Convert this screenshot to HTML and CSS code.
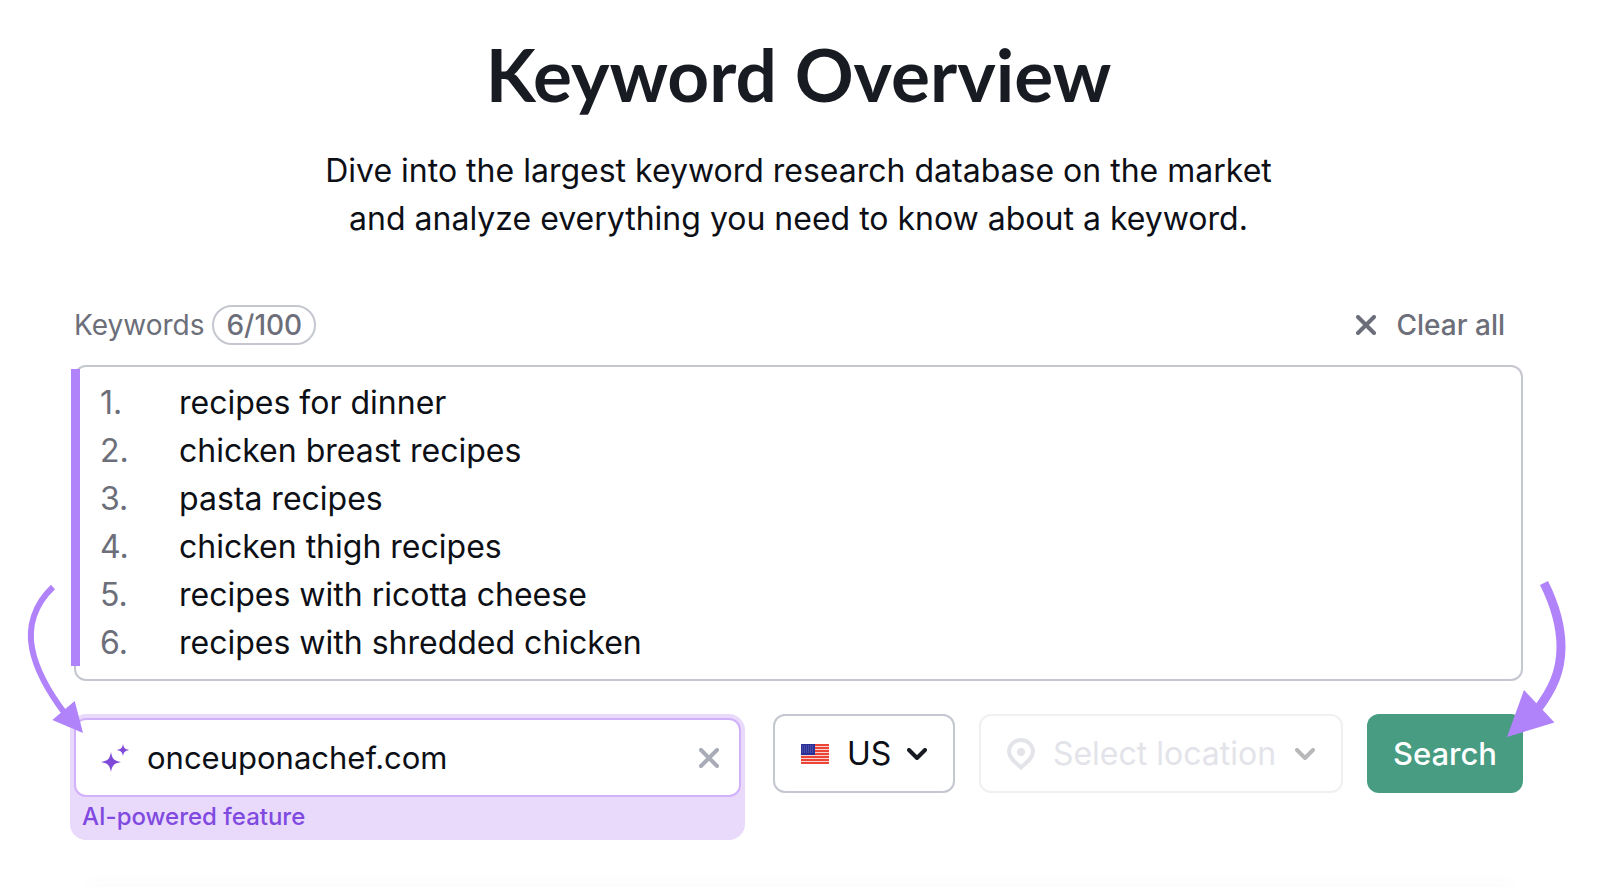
FILE: index.html
```html
<!DOCTYPE html>
<html lang="en">
<head>
    <meta charset="UTF-8">
    <meta name="viewport" content="width=device-width, initial-scale=1.0">
    <title>Keyword Overview</title>
    <link rel="stylesheet" href="styles.css">
</head>
<body>
    <main>
        <header>
            <h1>Keyword Overview</h1>
            <p>Dive into the largest keyword research database on the market<br>and analyze everything you need to know about a keyword.</p>
        </header>

        <form>
            <div class="keywords-head">
                <label for="keywords">Keywords</label>
                <span class="counter">6/100</span>
                <button type="button" class="clear-all">
                    <svg width="20" height="20" viewBox="0 0 20 20"><path d="M2 2l16 16M18 2L2 18"/></svg>
                    Clear all
                </button>
            </div>

            <div class="keywords-box">
                <div class="line-numbers">
                    <span>1.</span>
                    <span>2.</span>
                    <span>3.</span>
                    <span>4.</span>
                    <span>5.</span>
                    <span>6.</span>
                </div>
                <textarea id="keywords" rows="6" spellcheck="false">recipes for dinner
chicken breast recipes
pasta recipes
chicken thigh recipes
recipes with ricotta cheese
recipes with shredded chicken</textarea>
                <div class="marker"></div>
            </div>

            <div class="toolbar">
                <div class="domain">
                    <div class="domain-field">
                        <svg class="sparkles" width="28" height="28" viewBox="0 0 28 28">
                            <path d="M10 8c1.200 6.500 2.500 8.500 10 10c-7.500 1.500-8.800 3.500-10 10c-1.200-6.500-2.500-8.500-10-10c7.500-1.500 8.800-3.500 10-10z"/>
                            <path d="M22 0c.8 4 1.800 5 6 6c-4.200 1-5.200 2-6 6c-.8-4-1.800-5-6-6c4.200-1 5.200-2 6-6z"/>
                        </svg>
                        <input type="text" id="domain" value="onceuponachef.com" spellcheck="false">
                        <button type="button" class="clear" aria-label="Clear domain">
                            <svg width="20" height="20" viewBox="0 0 20 20"><path d="M2 2l16 16M18 2L2 18"/></svg>
                        </button>
                    </div>
                    <label for="domain">AI-powered feature</label>
                </div>

                <div class="select country">
                    <svg class="flag" width="28" height="20" viewBox="0 0 28 20">
                        <rect width="28" height="20" fill="#f9d4cf"/>
                        <path d="M0 1h28M0 4h28M0 7h28M0 10h28M0 13h28M0 16h28M0 19h28" stroke="#ec4436" stroke-width="2"/>
                        <rect width="14" height="11" fill="#2b2f98"/>
                        <path d="M1 2h12M1 4h12M1 6h12M1 8h12" stroke="#6d70b8" stroke-dasharray="1 1"/>
                    </svg>
                    <select aria-label="Country">
                        <option>US</option>
                    </select>
                    <svg class="chevron" width="20" height="12" viewBox="0 0 20 12"><path d="M2 2l8 8l8-8"/></svg>
                </div>

                <div class="select location">
                    <svg class="pin" width="28" height="32" viewBox="0 0 28 32">
                        <path d="M14 29.500C9 25 2 20 2 13.500a12 11.500 0 0 1 24 0C26 20 19 25 14 29.500z"/>
                        <circle cx="14" cy="14" r="4"/>
                    </svg>
                    <select aria-label="Location" disabled>
                        <option>Select location</option>
                    </select>
                    <svg class="chevron" width="20" height="12" viewBox="0 0 20 12"><path d="M2 2l8 8l8-8"/></svg>
                </div>

                <button type="submit" class="search">Search</button>

                <svg class="arrow arrow-left" width="60" height="150" viewBox="0 0 60 150">
                    <path class="shaft" d="M29 3C10 21 4 43 8 64C12 86 26 110 42 131"/>
                    <path class="head" d="M50.700 117L59 149L28.300 136z"/>
                </svg>
                <svg class="arrow arrow-right" width="66" height="158" viewBox="0 0 66 158">
                    <path class="shaft" d="M40 3C50 23 57 45 57 67C57 91 49 109 33 130"/>
                    <path class="head" d="M20 110L50.500 142.500L3 157z"/>
                </svg>
            </div>
        </form>
    </main>
    <div class="next-panel"></div>
</body>
</html>
```
FILE: styles.css
```css
* {
    box-sizing: border-box;
}
body {
    margin: 0;
    min-height: 100vh;
    display: flex;
    flex-direction: column;
    justify-content: space-between;
    overflow: hidden;
    background-color: white;
    color: #0d0f16;
    font-family: Inter, sans-serif;
    font-size: 32px;
}
main {
    padding: 32px 77px 0 74px;
}
header {
    text-align: center;
}
h1 {
    margin: 0;
    color: #191b23;
    font-family: Lato, sans-serif;
    font-size: 73px;
    font-weight: 700;
    line-height: 84px;
}
header p {
    margin: 31px 0 0;
    line-height: 48px;
}
svg {
    flex: none;
    fill: none;
}
button,
input,
select,
textarea {
    margin: 0;
    padding: 0;
    border: none;
    outline: none;
    background: none;
    color: inherit;
    font: inherit;
}
button {
    cursor: pointer;
}
.keywords-head {
    display: flex;
    align-items: center;
    gap: 8px;
    margin-top: 62px;
    color: #6c6e79;
    font-size: 28px;
    line-height: 36px;
}
.counter {
    padding: 0 12px;
    border: 2px solid #c4c7cf;
    border-radius: 20px;
    font-weight: 500;
}
.clear-all {
    display: flex;
    align-items: center;
    gap: 20px;
    margin-left: auto;
    padding-right: 18px;
    font-weight: 500;
}
.clear-all svg,
.clear svg {
    stroke: #6c6e79;
    stroke-width: 4;
    stroke-linecap: round;
}
.keywords-box {
    position: relative;
    display: flex;
    margin-top: 20px;
    padding: 12px 24px;
    border: 2px solid #c4c7cf;
    border-radius: 12px;
    line-height: 48px;
}
.line-numbers {
    display: flex;
    flex-direction: column;
    width: 79px;
    color: #6c6e79;
}
.keywords-box textarea {
    flex: 1;
    display: block;
    overflow: hidden;
    resize: none;
}
.marker {
    position: absolute;
    top: 2px;
    bottom: 13px;
    left: -5px;
    width: 9px;
    background-color: #b183fa;
}
.toolbar {
    position: relative;
    display: flex;
    align-items: flex-start;
    gap: 24px;
    margin-top: 33px;
}
.domain {
    flex: 1;
    min-width: 0;
    margin: 0 4px 0 -4px;
    padding: 4px 4px 5px;
    border-radius: 16px;
    background-color: #e9dafc;
}
.domain label {
    display: block;
    padding: 2px 0 0 8px;
    color: #8049e0;
    font-size: 24px;
    font-weight: 500;
    line-height: 36px;
}
.domain-field {
    display: flex;
    align-items: center;
    height: 79px;
    padding: 0 20px 0 25px;
    border: 2px solid #d0b1fa;
    border-radius: 12px;
    background-color: white;
}
.domain-field input {
    flex: 1;
    min-width: 0;
    margin-left: 18px;
    font-size: 31px;
}
.sparkles {
    fill: #7f4ad8;
}
.clear {
    display: flex;
}
.clear svg {
    stroke: #a9abb6;
}
.select {
    display: flex;
    align-items: center;
    height: 79px;
    padding: 0 26px;
    border: 2px solid #c4c7cf;
    border-radius: 12px;
}
.select select {
    flex: 1;
    min-width: 0;
    margin: 0 12px 0 18px;
    appearance: none;
}
.chevron {
    stroke: #191b23;
    stroke-width: 4;
    stroke-linecap: round;
    stroke-linejoin: round;
}
.country {
    width: 182px;
}
.location {
    flex: 0 1 364px;
    border-color: #f0f0f2;
    color: #e3e4e9;
}
.location select {
    opacity: 1;
}
.location .chevron {
    stroke: #b8b8ba;
}
.pin {
    stroke: #e3e4e9;
    stroke-width: 4;
}
.pin circle {
    fill: #e3e4e9;
    stroke: none;
}
.search {
    height: 79px;
    padding: 0 26px;
    border-radius: 12px;
    background-color: #479c82;
    color: white;
    font-size: 31px;
    font-weight: 500;
}
.arrow {
    position: absolute;
    pointer-events: none;
}
.arrow .shaft {
    stroke: #b183fa;
}
.arrow .head {
    fill: #b183fa;
}
.arrow-left {
    top: -130px;
    left: -50px;
    stroke-width: 6;
}
.arrow-right {
    top: -134px;
    right: -47px;
    stroke-width: 9;
}
.next-panel {
    height: 1px;
    margin: 0 90px;
    box-shadow: 0 0 16px 2px rgba(25, 27, 35, 0.05);
}
```
